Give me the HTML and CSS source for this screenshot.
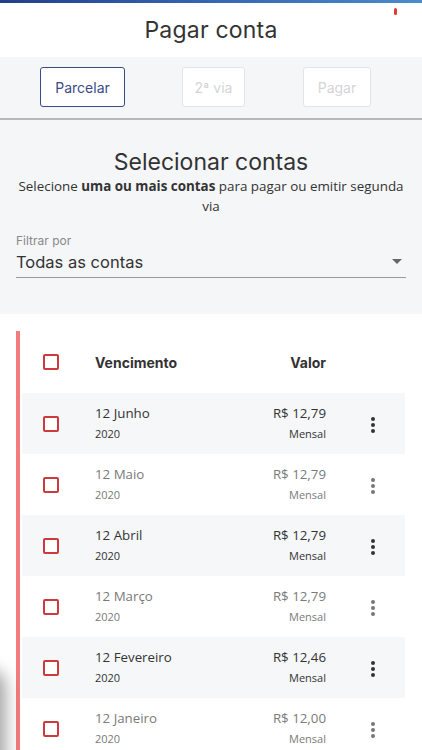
FILE: index.html
```html
<!DOCTYPE html>
<html lang="pt-BR">
<head>
    <meta charset="UTF-8">
    <meta name="viewport" content="width=device-width, initial-scale=1.0">
    <title>Pagar conta</title>
    <link rel="stylesheet" href="styles.css">
</head>
<body>
    <div class="topbar"></div>
    <span class="notch"></span>

    <header class="header">
        <h1 class="title">Pagar conta</h1>
    </header>

    <div class="actions">
        <button class="btn btn-primary">Parcelar</button>
        <button class="btn btn-disabled btn-via">2ª via</button>
        <button class="btn btn-disabled btn-pay">Pagar</button>
    </div>

    <section class="select">
        <h2 class="select-title">Selecionar contas</h2>
        <p class="select-text">Selecione <strong>uma ou mais contas</strong> para pagar ou emitir segunda via</p>

        <div class="filter">
            <label class="filter-label">Filtrar por</label>
            <div class="filter-field">
                <span>Todas as contas</span>
                <span class="caret"></span>
            </div>
        </div>
    </section>

    <section class="list">
        <div class="row row-head">
            <div class="cell-check"><span class="check"></span></div>
            <div class="cell-date">Vencimento</div>
            <div class="cell-value">Valor</div>
            <div class="cell-menu"></div>
        </div>

        <div class="row row-active">
            <div class="cell-check"><span class="check"></span></div>
            <div class="cell-date"><span class="main">12 Junho</span><span class="sub">2020</span></div>
            <div class="cell-value"><span class="main">R$ 12,79</span><span class="sub">Mensal</span></div>
            <div class="cell-menu"><span class="kebab"><i></i><i></i><i></i></span></div>
        </div>

        <div class="row row-muted">
            <div class="cell-check"><span class="check"></span></div>
            <div class="cell-date"><span class="main">12 Maio</span><span class="sub">2020</span></div>
            <div class="cell-value"><span class="main">R$ 12,79</span><span class="sub">Mensal</span></div>
            <div class="cell-menu"><span class="kebab"><i></i><i></i><i></i></span></div>
        </div>

        <div class="row row-active">
            <div class="cell-check"><span class="check"></span></div>
            <div class="cell-date"><span class="main">12 Abril</span><span class="sub">2020</span></div>
            <div class="cell-value"><span class="main">R$ 12,79</span><span class="sub">Mensal</span></div>
            <div class="cell-menu"><span class="kebab"><i></i><i></i><i></i></span></div>
        </div>

        <div class="row row-muted">
            <div class="cell-check"><span class="check"></span></div>
            <div class="cell-date"><span class="main">12 Março</span><span class="sub">2020</span></div>
            <div class="cell-value"><span class="main">R$ 12,79</span><span class="sub">Mensal</span></div>
            <div class="cell-menu"><span class="kebab"><i></i><i></i><i></i></span></div>
        </div>

        <div class="row row-active">
            <div class="cell-check"><span class="check"></span></div>
            <div class="cell-date"><span class="main">12 Fevereiro</span><span class="sub">2020</span></div>
            <div class="cell-value"><span class="main">R$ 12,46</span><span class="sub">Mensal</span></div>
            <div class="cell-menu"><span class="kebab"><i></i><i></i><i></i></span></div>
        </div>

        <div class="row row-muted">
            <div class="cell-check"><span class="check"></span></div>
            <div class="cell-date"><span class="main">12 Janeiro</span><span class="sub">2020</span></div>
            <div class="cell-value"><span class="main">R$ 12,00</span><span class="sub">Mensal</span></div>
            <div class="cell-menu"><span class="kebab"><i></i><i></i><i></i></span></div>
        </div>
    </section>

    <div class="edge-shadow"></div>
</body>
</html>
```

FILE: styles.css
```css
* {
    margin: 0;
    padding: 0;
    box-sizing: border-box;
}

body {
    font-family: 'Open Sans', 'Liberation Sans', sans-serif;
    background: #fff;
    color: #333;
    width: 422px;
    height: 750px;
    overflow: hidden;
    position: relative;
}

.topbar {
    height: 3px;
    background: linear-gradient(90deg, #233f8c 0%, #3566b0 50%, #4a8ccc 100%);
}

.notch {
    position: absolute;
    left: 394px;
    top: 8px;
    width: 3px;
    height: 7px;
    border-radius: 2px;
    background: #e53935;
}

.header {
    height: 54px;
    display: flex;
    justify-content: center;
    align-items: center;
}

.title {
    font-family: 'Inter', 'DejaVu Sans', sans-serif;
    font-weight: 400;
    font-size: 23px;
    color: #333;
    letter-spacing: 0.2px;
}

/* barra de ações */
.actions {
    height: 63px;
    background: #f5f6f8;
    border-bottom: 2px solid #b8b8b8;
    display: flex;
    align-items: center;
    padding-left: 40px;
    gap: 57px;
}

.btn {
    height: 40px;
    background: #fff;
    border-radius: 3px;
    font-family: 'Inter', 'DejaVu Sans', sans-serif;
    font-size: 14px;
    margin-top: -1px;
}

.btn-primary {
    width: 85px;
    border: 1px solid #3b4a8a;
    color: #3b4a8a;
}

.btn-disabled {
    border: 1px solid #e3e4e6;
    color: #d4d5d8;
}

.btn-via { width: 63px; }
.btn-pay { width: 68px; margin-left: 1px; }

/* seleção */
.select {
    background: #f5f6f8;
    height: 194px;
    padding: 28px 16px 0;
    text-align: center;
}

.select-title {
    font-family: 'Inter', 'DejaVu Sans', sans-serif;
    font-weight: 400;
    font-size: 23px;
    color: #333;
    line-height: 28px;
}

.select-text {
    font-size: 13.4px;
    line-height: 20px;
    color: #333;
}

.select-text strong {
    font-weight: 700;
}

.filter {
    text-align: left;
    margin-top: 17px;
}

.filter-label {
    display: block;
    font-family: 'Inter', 'DejaVu Sans', sans-serif;
    font-size: 12px;
    color: #888;
    line-height: 16px;
}

.filter-field {
    display: flex;
    justify-content: space-between;
    align-items: center;
    height: 29px;
    border-bottom: 1px solid #9a9a9a;
    font-family: 'Inter', 'DejaVu Sans', sans-serif;
    font-size: 16.5px;
    color: #333;
    padding-bottom: 3px;
}

.caret {
    width: 0;
    height: 0;
    border-left: 5px solid transparent;
    border-right: 5px solid transparent;
    border-top: 5px solid #666;
    margin-right: 4px;
}

/* lista de contas */
.list {
    margin: 17px 17px 0 16px;
    border-left: 4px solid #f47c7c;
    padding-left: 2px;
    height: 440px;
}

.row {
    display: flex;
    height: 61px;
}

.row-head {
    height: 62px;
    align-items: center;
    background: #fff;
}

.row-head .cell-date,
.row-head .cell-value {
    font-family: 'Inter', 'DejaVu Sans', sans-serif;
    font-weight: 700;
    font-size: 14px;
    color: #333;
}

.row-active {
    background: #f6f7f9;
}

.row-muted {
    background: #fff;
}

.cell-check {
    width: 73px;
    padding-left: 21px;
    display: flex;
    align-items: center;
}

.check {
    width: 16px;
    height: 16px;
    border: 2px solid #cc3a3e;
    border-radius: 2px;
    background: #fff;
}

.cell-date {
    flex: 1;
    display: flex;
    flex-direction: column;
}

.cell-value {
    width: 90px;
    text-align: right;
    display: flex;
    flex-direction: column;
    align-items: flex-end;
}

.row .main {
    font-size: 13.3px;
    line-height: 20px;
    margin-top: 10px;
}

.row .sub {
    font-size: 11px;
    line-height: 16px;
    margin-top: 3px;
}

.row-active .main,
.row-active .sub {
    color: #333;
}

.row-muted .main,
.row-muted .sub {
    color: #7a7a7a;
}

.cell-menu {
    width: 79px;
    display: flex;
    align-items: center;
    padding-left: 45px;
}

.row-head .cell-menu {
    display: block;
}

.kebab {
    display: flex;
    flex-direction: column;
    gap: 2px;
    margin-top: 2px;
}

.kebab i {
    width: 4px;
    height: 4px;
    border-radius: 50%;
    background: #333;
}

.row-muted .kebab i {
    background: #777;
}

.edge-shadow {
    position: absolute;
    left: -24px;
    top: 675px;
    width: 24px;
    height: 110px;
    border-radius: 12px;
    box-shadow: 0 0 16px 6px rgba(0,0,0,0.35);
}
```
